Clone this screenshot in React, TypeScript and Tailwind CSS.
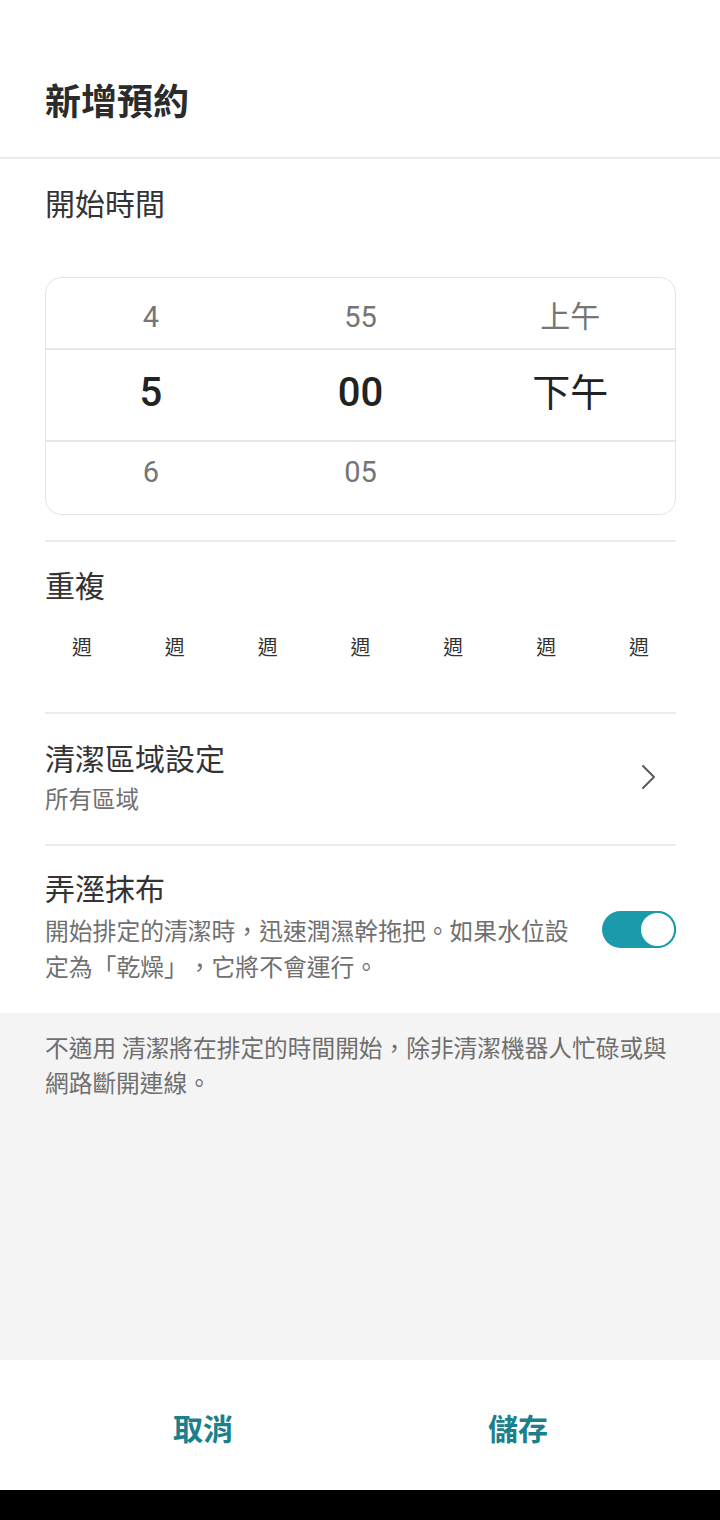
import React from "react";

const FONT = { fontFamily: "Roboto, 'Noto Sans CJK TC', sans-serif" };

function Chevron() {
  return (
    <svg width="16" height="26" viewBox="0 0 16 26" fill="none">
      <polyline points="2,2 13,13 2,24" stroke="#5a5a5a" strokeWidth="2" strokeLinecap="round" strokeLinejoin="round" />
    </svg>
  );
}

export default function App() {
  const days = ["週", "週", "週", "週", "週", "週", "週"];
  return (
    <div className="w-[720px] h-[1520px] flex flex-col bg-white text-[#333] [text-spacing-trim:space-all]" style={FONT}>
      {/* Header */}
      <div className="h-[157px] px-[45px] pt-[81px] shrink-0">
        <div className="text-[36px] leading-[44px] font-bold text-[#2b2b2b]">新增預約</div>
      </div>
      <div className="h-[2px] bg-[#ebebeb] shrink-0" />

      {/* Content */}
      <div className="pr-[44px] pl-[45px] shrink-0">
        <div className="pt-[26px] text-[30px] leading-[40px] text-[#333]">開始時間</div>

        <div className="mt-[52px] h-[238px] rounded-[16px] border border-[#e4e4e4] flex flex-col overflow-hidden">
          <div className="h-[72px] grid grid-cols-3 items-center pt-[8px] border-b-2 border-[#e6e6e6] text-[#757575]">
            <div className="text-center text-[29px] leading-[36px]">4</div>
            <div className="text-center text-[29px] leading-[36px]">55</div>
            <div className="text-center text-[30px] leading-[36px]">上午</div>
          </div>
          <div className="h-[92px] grid grid-cols-3 items-center pb-[4px] border-b-2 border-[#e6e6e6] text-[#222]">
            <div className="text-center text-[40px] leading-[48px] font-medium">5</div>
            <div className="text-center text-[40px] leading-[48px] font-medium">00</div>
            <div className="text-center text-[38px] leading-[48px]">下午</div>
          </div>
          <div className="flex-1 grid grid-cols-3 items-center pb-[12px] text-[#757575]">
            <div className="text-center text-[29px] leading-[36px]">6</div>
            <div className="text-center text-[29px] leading-[36px]">05</div>
            <div />
          </div>
        </div>

        <div className="mt-[25px] h-[2px] bg-[#ebebeb]" />

        <div className="mt-[25px] text-[30px] leading-[40px]">重複</div>
        <div className="mt-[27px] flex justify-between px-[27px] text-[20px] leading-[28px] text-[#333]">
          {days.map((d, i) => (
            <span key={i} className="w-[20px] text-center">{d}</span>
          ))}
        </div>

        <div className="mt-[50px] h-[2px] bg-[#ebebeb]" />

        <div className="pt-[26px] pb-[28px] flex items-center">
          <div className="flex-1">
            <div className="text-[30px] leading-[40px]">清潔區域設定</div>
            <div className="mt-[4px] text-[23.5px] leading-[32px] text-[#707070]">所有區域</div>
          </div>
          <div className="mr-[19px] mt-[-2px]">
            <Chevron />
          </div>
        </div>

        <div className="h-[2px] bg-[#ebebeb]" />

        <div className="pt-[24px] pb-[27px]">
          <div className="text-[30px] leading-[40px]">弄溼抹布</div>
          <div className="mt-[4px] flex items-start">
            <div className="flex-1 mr-[28px] text-[23.8px] leading-[36px] text-[#707070]">
              開始排定的清潔時，迅速潤濕幹拖把。如果水位設定為「乾燥」，它將不會運行。
            </div>
            <div className="mt-[-3px] w-[74px] h-[37px] rounded-full bg-[#1a9aaa] flex items-center justify-end shrink-0">
              <div className="w-[37px] h-[37px] rounded-full bg-white border-2 border-[#1a9aaa]" />
            </div>
          </div>
        </div>
      </div>

      {/* Gray note */}
      <div className="flex-1 bg-[#f4f4f4] px-[45px] pt-[19px]">
        <div className="text-[23.7px] leading-[35px] text-[#6e6e6e]">
          不適用 清潔將在排定的時間開始，除非清潔機器人忙碌或與網路斷開連線。
        </div>
      </div>

      {/* Buttons */}
      <div className="h-[130px] shrink-0 grid grid-cols-2 bg-white pt-[10px]">
        <div className="flex items-center justify-end pr-[127px]">
          <span className="text-[30px] leading-[40px] font-bold text-[#1b7f8c]">取消</span>
        </div>
        <div className="flex items-center justify-start pl-[128px]">
          <span className="text-[30px] leading-[40px] font-bold text-[#1b7f8c]">儲存</span>
        </div>
      </div>
      <div className="h-[30px] bg-black shrink-0" />
    </div>
  );
}
